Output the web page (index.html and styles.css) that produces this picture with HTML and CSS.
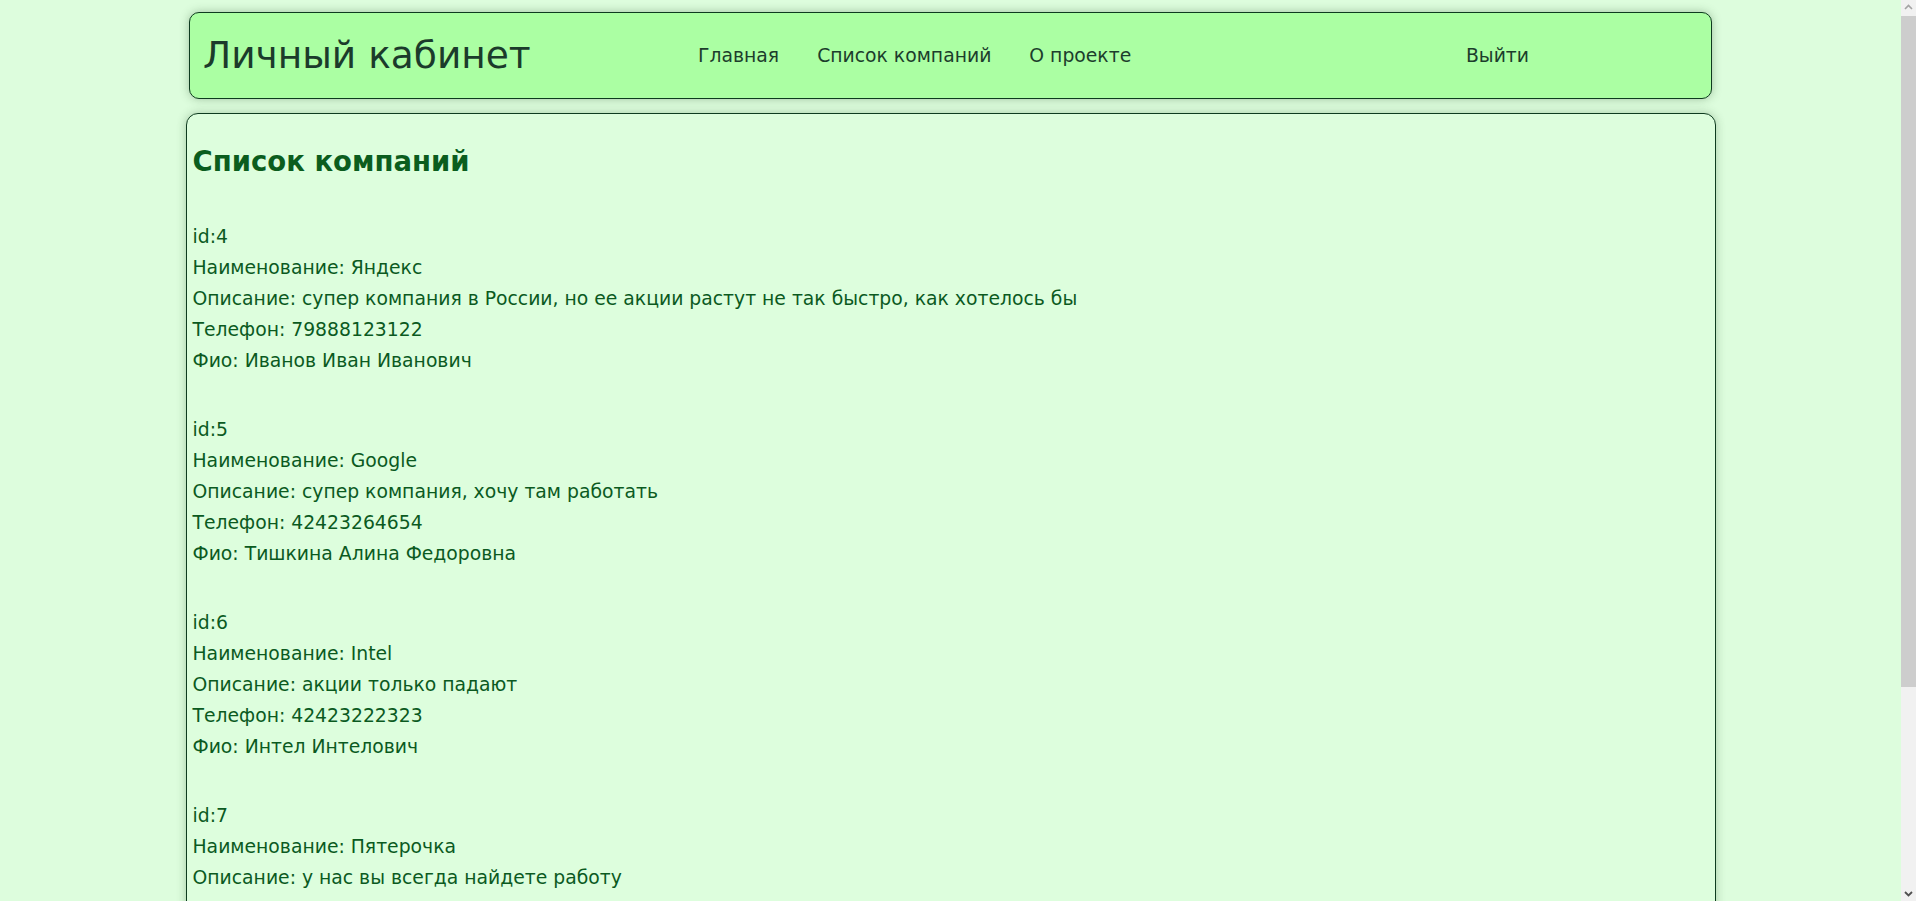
FILE: index.html
```html
<!DOCTYPE html>
<html lang="ru">
<head>
<meta charset="utf-8">
<title>Список компаний</title>
<link rel="stylesheet" href="styles.css">
</head>
<body>
<header class="topbar">
  <div class="brand">Личный кабинет</div>
  <nav class="nav">
    <a class="nav-link" href="#">Главная</a>
    <a class="nav-link" href="#">Список компаний</a>
    <a class="nav-link" href="#">О проекте</a>
  </nav>
  <a class="nav-link logout" href="#">Выйти</a>
</header>
<main class="content">
  <h2 class="title">Список компаний</h2>
  <div class="company">
    <div>id:4</div>
    <div>Наименование: Яндекс</div>
    <div>Описание: супер компания в России, но ее акции растут не так быстро, как хотелось бы</div>
    <div>Телефон: 79888123122</div>
    <div>Фио: Иванов Иван Иванович</div>
  </div>
  <div class="company">
    <div>id:5</div>
    <div>Наименование: Google</div>
    <div>Описание: супер компания, хочу там работать</div>
    <div>Телефон: 42423264654</div>
    <div>Фио: Тишкина Алина Федоровна</div>
  </div>
  <div class="company">
    <div>id:6</div>
    <div>Наименование: Intel</div>
    <div>Описание: акции только падают</div>
    <div>Телефон: 42423222323</div>
    <div>Фио: Интел Интелович</div>
  </div>
  <div class="company">
    <div>id:7</div>
    <div>Наименование: Пятерочка</div>
    <div>Описание: у нас вы всегда найдете работу</div>
    <div>Телефон: 78005555550</div>
    <div>Фио: Петров Петр Петрович</div>
  </div>
</main>
<div class="scrollbar" aria-hidden="true">
  <div class="sb-arrow">
    <svg width="15" height="15" viewBox="0 0 15 15"><path d="M4 9 L7.5 5.5 L11 9" fill="none" stroke="#a3a3a3" stroke-width="1.6"/></svg>
  </div>
  <div class="sb-track">
    <div class="sb-thumb"></div>
  </div>
  <div class="sb-arrow">
    <svg width="15" height="15" viewBox="0 0 15 15"><path d="M4 6 L7.5 9.5 L11 6" fill="none" stroke="#505050" stroke-width="1.8"/></svg>
  </div>
</div>
</body>
</html>
```
FILE: styles.css
```css
html, body {
  margin: 0;
  padding: 0;
}
body {
  background: #ddfddd;
  font-family: "DejaVu Sans", sans-serif;
  color: #0b5a1f;
  padding: 12px 15px 20px 0;
}
.topbar {
  width: 1523px;
  height: 87px;
  margin: 0 auto;
  box-sizing: border-box;
  display: flex;
  align-items: center;
  padding: 0 182px 0 13px;
  background: #abffa3;
  border: 1px solid #0e3b1f;
  border-radius: 10px;
  box-shadow: 0 0 10px rgba(40, 80, 40, 0.35);
}
.brand {
  flex: 0 0 495px;
  font-size: 37.5px;
  color: #1b3b2b;
  line-height: 1;
}
.nav {
  display: flex;
  gap: 38px;
}
.nav-link {
  font-size: 18.8px;
  color: #1c3d2c;
  text-decoration: none;
}
.logout {
  margin-left: auto;
}
.content {
  width: 1530px;
  margin: 14px auto 0;
  box-sizing: border-box;
  padding: 29px 6px 180px;
  background: #ddfedd;
  border: 1px solid #0e3b1f;
  border-radius: 12px;
  box-shadow: 0 0 10px rgba(40, 80, 40, 0.3);
}
.title {
  margin: 0 0 42px;
  font-size: 27.5px;
  line-height: 36px;
  font-weight: bold;
  color: #0b5d1e;
}
.company {
  font-size: 18.8px;
  line-height: 31px;
  margin-bottom: 38px;
}
.scrollbar {
  position: fixed;
  top: 0;
  right: 0;
  bottom: 0;
  width: 15px;
  display: flex;
  flex-direction: column;
  background: #f1f1f1;
}
.sb-arrow {
  height: 15px;
  flex: 0 0 15px;
}
.sb-arrow svg {
  display: block;
}
.sb-track {
  flex: 1;
  padding-top: 1px;
}
.sb-thumb {
  height: 671px;
  background: #cdcdcd;
}
```
